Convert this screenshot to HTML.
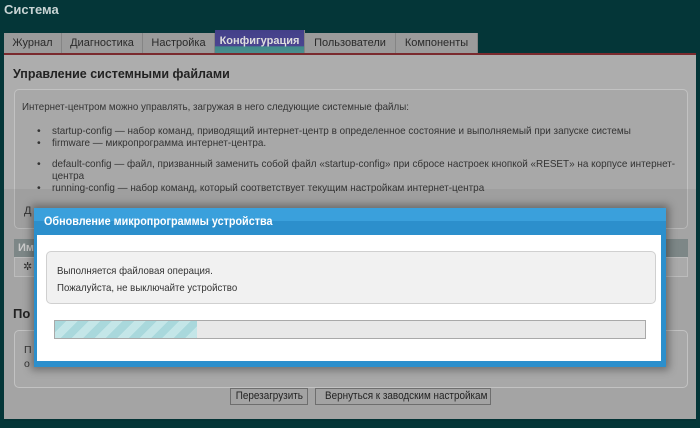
<!DOCTYPE html>
<html><head><meta charset="utf-8"><style>
*{box-sizing:border-box;margin:0;padding:0}
body{width:700px;height:428px;overflow:hidden;background:#043638;font-family:"Liberation Sans",sans-serif;position:relative;font-size:11px;color:#333}
.abs{position:absolute;white-space:nowrap}
.n{transform:scaleX(.92);transform-origin:left top}
#title{left:4px;top:2px;color:#c8d4d4;font-weight:bold;font-size:13px}
.tab{position:absolute;top:33px;height:20px;background:#9b9b9b;border-right:1px solid #858585;color:#2a2a2a;font-size:11px;line-height:20px;text-align:center;white-space:nowrap}
#panel{left:4px;top:53px;width:692px;height:366px;background:#adadad;border-top:2px solid #7a2a2e}
.box{position:absolute;border:1px solid #c2c2c2;border-radius:5px;background:#a8a8a8}
#modal{left:34px;top:208px;width:632px;height:159px;background:#2c8fcc;box-shadow:0 0 8px 3px rgba(0,0,0,.35)}
.btn{position:absolute;top:388px;height:17px;border:1px solid #6e6e6e;background:#a3a3a3;font-size:11px;line-height:15px;text-align:center;color:#222;white-space:nowrap;overflow:hidden}
.btn span{display:inline-block;transform:scaleX(.9)}
</style></head><body>
<div id="title" class="abs">Система</div>
<div class="tab" style="left:4px;width:58px">Журнал</div>
<div class="tab" style="left:62px;width:81px">Диагностика</div>
<div class="tab" style="left:143px;width:72px">Настройка</div>
<div class="tab" style="left:215px;width:90px;background:linear-gradient(#434089 0,#4b4590 70%,#3f8a8a 72%,#4a8e8e 100%);color:#ddd;font-weight:bold;top:30px;height:23px;line-height:23px">Конфигурация</div>
<div class="tab" style="left:305px;width:91px">Пользователи</div>
<div class="tab" style="left:396px;width:82px">Компоненты</div>
<div id="panel" class="abs">
 <div class="abs n" style="left:9px;top:11px;font-size:13px;font-weight:bold;color:#222;transform:scaleX(.96)">Управление системными файлами</div>
 <div class="box" style="left:10px;top:34px;width:674px;height:140px"></div>
 <div class="abs n" style="left:18px;top:46px;color:#333;font-size:10.5px;line-height:13px;transform:scaleX(.93)">Интернет-центром можно управлять, загружая в него следующие системные файлы:</div>
 <div class="abs" style="left:33px;top:70px;font-size:10.5px;line-height:12px;color:#333">•<br>•<br><div style="height:9px"></div>•<br><br>•</div>
 <div class="abs n" style="left:48px;top:70px;font-size:10.5px;line-height:12px;color:#333;transform:scaleX(.945)">
  startup-config — набор команд, приводящий интернет-центр в определенное состояние и выполняемый при запуске системы<br>
  firmware — микропрограмма интернет-центра.<br><div style="height:9px"></div>
  default-config — файл, призванный заменить собой файл «startup-config» при сбросе настроек кнопкой «RESET» на корпусе интернет-<br>центра<br>
  running-config — набор команд, который соответствует текущим настройкам интернет-центра
 </div>
 <div class="abs" style="left:0;top:134px;width:692px;height:232px;background:rgba(0,0,0,.05)"></div>
 <div class="abs" style="left:20px;top:150px;font-size:11px">Д</div>
 <div class="abs" style="left:10px;top:184px;width:674px;height:18px;background:#7d8787;color:#ccc;font-weight:bold;padding-left:4px;line-height:18px">Им</div>
 <div class="abs" style="left:10px;top:202px;width:674px;height:20px;border:1px solid #bcbcbc;background:#aaa;padding-left:8px;line-height:18px">✲</div>
 <div class="abs" style="left:9px;top:251px;font-size:13px;font-weight:bold;color:#222">По</div>
 <div class="box" style="left:10px;top:275px;width:674px;height:58px"></div>
 <div class="abs" style="left:20px;top:288px;font-size:10.5px;line-height:14px">П<br>о</div>
</div>
<div id="modal" class="abs">
 <div class="abs" style="left:0;top:0;width:632px;height:13px;background:#3aa0dc"></div>
 <div class="abs n" style="left:10px;top:6px;color:#fff;font-weight:bold;font-size:12px;transform:scaleX(.9)">Обновление микропрограммы устройства</div>
 <div class="abs" style="left:3px;top:27px;width:624px;height:126px;background:#fff">
  <div class="abs" style="left:9px;top:16px;width:610px;height:53px;background:#f1f1f1;border:1px solid #d0d0d0;border-radius:5px"></div>
  <div class="abs n" style="left:20px;top:28px;font-size:10.5px;color:#333;line-height:17px">Выполняется файловая операция.<br>Пожалуйста, не выключайте устройство</div>
  <div class="abs" style="left:17px;top:85px;width:592px;height:19px;background:#e8e8e8;border:1px solid #a9a9a9;overflow:hidden">
   <div style="width:142px;height:17px;background:repeating-linear-gradient(135deg,#a9d8dc 0 8px,#c4e6e8 8px 16px)"></div>
  </div>
 </div>
</div>
<div class="btn" style="left:230px;width:78px"><span>Перезагрузить</span></div>
<div class="btn" style="left:315px;width:176px"><span>Вернуться к заводским настройкам</span></div>
</body></html>
